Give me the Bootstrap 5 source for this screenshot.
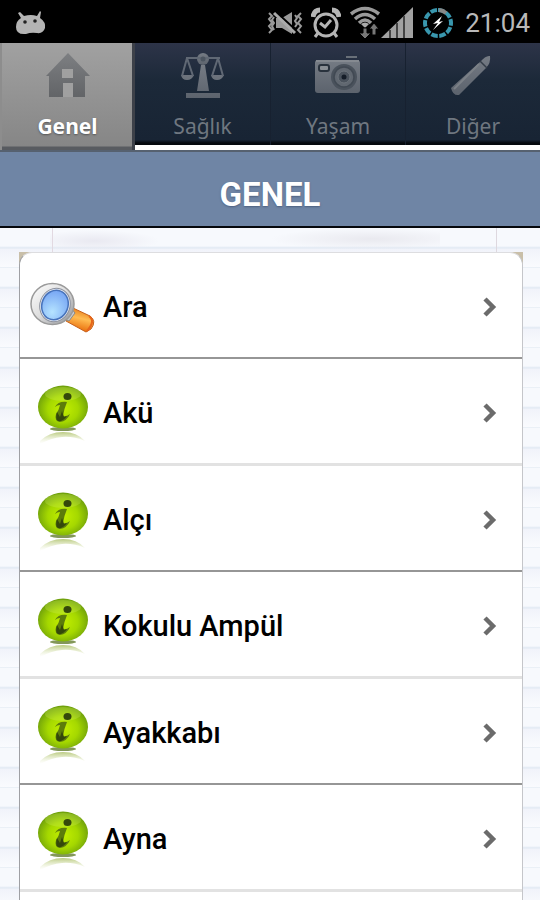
<!DOCTYPE html>
<html lang="tr">
<head>
<meta charset="utf-8">
<meta name="viewport" content="width=device-width, initial-scale=1">
<title>Genel</title>
<link href="https://cdn.jsdelivr.net/npm/bootstrap@5.3.0/dist/css/bootstrap.min.css" rel="stylesheet">
<style>
  body { font-family: Roboto, "Noto Sans", sans-serif; background: #fff; }
  .screen { height: 100vh; overflow: hidden; }
  .statusbar { background: #000; height: 43px; padding: 2px 10px 0 15px; }
  .clock { color: #b9b9b9; font-size: 26px; line-height: 40px; margin-left: 10px; }
  .tabs { height: 107px; padding-bottom: 5px; background: linear-gradient(#2d3448, #1c2939 35%, #182434 97px, #05090e 100px 102px, #fff 102px); }
  .tab-btn { border: 0; border-left: 1px solid #172130; padding: 9px 0 0; background: none;
    color: #6f7780; font: 21px/28px "Noto Sans", sans-serif; }
  .tab-btn:nth-child(2) { border-left: 0; }
  .tab-btn svg { margin-bottom: 12px; }
  .tab-btn.current { color: #fff; font-weight: 700; background: linear-gradient(90deg, #8d8d8d 2px, #0000 2px calc(100% - 3px), #3d4149 calc(100% - 3px)), linear-gradient(#a1a1a1, #868686 103px, #585b60 104px);
    border: 0; margin-bottom: -5px; text-shadow: 0 1px 2px #555; }
  .titlebar { background: #6f85a5; border-top: 2px solid #566170; border-bottom: 2px solid #05070c; padding: 23px 0 11px; }
  .titlebar h1 { font-size: 33px; line-height: 40px; font-weight: 700; color: #fff; text-shadow: 0 1px 2px #4d5f7e; }
  .paper { padding: 24px 17px 0 19px; background:
      linear-gradient(#e2d9e1, #e2d9e1) 52px 0 / 1px 24px no-repeat,
      linear-gradient(#ded8df, #ded8df) calc(100% - 43px) 0 / 1px 24px no-repeat,
      radial-gradient(ellipse at 40% 50%, #e9e9f1 0, #e9e9f100 70%) 50px 2px / 110px 22px no-repeat,
      radial-gradient(ellipse at 60% 50%, #e9e9ef 0, #e9e9ef00 70%) 270px 0 / 170px 22px no-repeat,
      repeating-linear-gradient(#f7f9fd 0 18px, #dfe8f2 20px, #f1f3fa 21px, #fafbfe 39px, #dbe5ef 40px); }
  .paper-corner { background: #c9bfa9; }
  .items { background: #fff; border: 1px solid #9fa0a4; border-top-color: #dddde0; border-bottom: 0; border-right-color: #c5c6ca; border-radius: 13px 13px 0 0; }
  .item { height: 106px; border-bottom: 2px solid #969696; color: #000; padding: 4px 24px 0 9px; font-size: 29px; line-height: 36px; font-weight: 500; }
  .item:nth-child(even) { height: 107px; border-bottom: 3px solid #e2e2e2; }
  .item-icon { width: 68px; margin-right: 6px; }
</style>
<script src="https://cdn.jsdelivr.net/npm/bootstrap@5.3.0/dist/js/bootstrap.bundle.min.js"></script>
</head>
<body>
<svg width="0" height="0" class="position-absolute" aria-hidden="true">
  <defs>
    <radialGradient id="green" cx=".5" cy=".55" r=".55"><stop offset="0" stop-color="#c4f000"/><stop offset=".55" stop-color="#a5d800"/><stop offset="1" stop-color="#6c9d0c"/></radialGradient>
    <linearGradient id="mirror" x2="0" y2="1"><stop offset="0" stop-color="#a8bd60" stop-opacity=".8"/><stop offset="1" stop-color="#e8efc8" stop-opacity="0"/></linearGradient>
    <linearGradient id="metal" x2="1" y2="1"><stop offset="0" stop-color="#fff"/><stop offset=".5" stop-color="#ddd"/><stop offset="1" stop-color="#8d8f94"/></linearGradient>
    <radialGradient id="lens" cx=".5" cy=".75" r=".75"><stop offset="0" stop-color="#b5e3ff"/><stop offset="1" stop-color="#76a5f4"/></radialGradient>
    <linearGradient id="handle" x1=".65" y1=".1" x2=".4" y2=".95"><stop offset="0" stop-color="#e98420"/><stop offset=".4" stop-color="#ffbc52"/><stop offset="1" stop-color="#e86a08"/></linearGradient>
    <linearGradient id="grey" x2="0" y2="1"><stop offset="0" stop-color="#757b84"/><stop offset="1" stop-color="#5c636d"/></linearGradient>
    <linearGradient id="house" x2="0" y2="1"><stop offset="0" stop-color="#7d7f82"/><stop offset="1" stop-color="#626467"/></linearGradient>
    <symbol id="info" viewBox="0 0 68 68">
      <path d="M11 62Q20 53 34 53T56 62Q44 57 33 58T11 65Z" fill="url(#mirror)"/>
      <ellipse cx="34" cy="50" rx="13" ry="2" fill="#4f6b12" opacity=".7"/>
      <ellipse cx="34" cy="28" rx="25" ry="21.5" fill="url(#green)"/>
      <ellipse cx="34" cy="15" rx="18" ry="7" fill="#d9f26a" opacity=".25"/>
      <ellipse cx="38.500" cy="17.500" rx="4" ry="3.500" fill="#34480b"/>
      <path d="M26 28Q29 22 38 23Q35 30 34 37Q37 38 41 35Q38 42 31 43Q25 42 27 35Q30 31 31 26Q28 26 26 28Z" fill="#5c7c0b"/>
      <path d="M28 33L31 38 33 32 35 38 38 37Q34 43 29 42Q26 40 28 33Z" fill="#34480b"/>
    </symbol>
    <symbol id="next" viewBox="0 0 16 22"><path d="M3 3L11 11 3 19" fill="none" stroke="#6b6b6b" stroke-width="4.5"/></symbol>
  </defs>
</svg>

<div class="screen d-flex flex-column">
  <div class="statusbar d-flex align-items-center flex-shrink-0">
    <svg width="32" height="26" viewBox="0 0 32 26" class="me-auto" aria-label="Android"><path d="M5 2L9 6Q16 4 22 6L25 1 26 2 25 8Q31 12 30 18Q28 24 22 23Q16 22 11 24Q1 25 1 17Q1 11 6 8L3 3Z" fill="#b4b4b4"/><circle cx="10" cy="12" r="1.8" fill="#222"/><circle cx="20" cy="11" r="1.8" fill="#222"/></svg>
    <svg width="36" height="28" viewBox="0 0 36 28" aria-label="Sessiz"><path d="M9 9H15L25 3V25L15 19H9Z" fill="#999"/><path d="M8 2L31 23" stroke="#000" stroke-width="2"/><path d="M7 4L28 24" stroke="#aaa" stroke-width="3"/><path d="M2 4l3 3-3 3 3 4-3 3 3 4-3 3M7 8l-2 3 2 3-2 3 2 4M34 4l-3 3 3 3-3 4 3 3-3 4 3 3M28 6l2 3-2 3 2 3-2 3" fill="none" stroke="#999" stroke-width="2"/></svg>
    <svg class="ms-2" width="30" height="32" viewBox="0 0 30 32" aria-label="Alarm"><circle cx="15" cy="18" r="11" fill="none" stroke="#b5b5b5" stroke-width="3"/><path d="M2 10Q3 3 9 3M21 3Q27 3 28 10" fill="none" stroke="#b5b5b5" stroke-width="5"/><path d="M9 16L14 20 20 13M7 26L4 30M23 26L26 30" fill="none" stroke="#b5b5b5" stroke-width="3"/></svg>
    <svg class="ms-2" width="32" height="34" viewBox="0 0 32 34" aria-label="Wi-Fi"><path d="M2 8Q16-3 30 8M6 13Q16 4 26 13M10 17Q16 11 22 17" fill="none" stroke="#999" stroke-width="3.5"/><path d="M12 18Q16 15 20 18L16 22Z" fill="#aaa"/><path d="M14 22h4v5h4l-6 6-6-6h4ZM23 29v-6h-3l5-6 5 6h-3v6Z" fill="#777" stroke="#000"/></svg>
    <svg width="32" height="34" viewBox="0 0 32 34" aria-label="Sinyal"><path d="M0 32L32 1V32Z" fill="#a2a2a2"/><path d="M9 24V32M16 17V32M23 10V32" stroke="#444" stroke-width="2"/></svg>
    <svg class="ms-2" width="34" height="34" viewBox="0 0 34 34" aria-label="Pil"><circle cx="17" cy="17" r="13" fill="none" stroke="#3997ae" stroke-width="4" stroke-dasharray="6.6 1.568" transform="rotate(-90 17 17)"/><path d="M18 4A13 13 0 0 1 25 7" fill="none" stroke="#888" stroke-width="4"/><path d="M21 10L12 18 17 17 12 24 22 15 18 16Z" fill="#fff"/></svg>
    <span class="clock">21:04</span>
  </div>

  <nav class="tabs d-flex flex-shrink-0" aria-label="Kategoriler">
    <button type="button" class="tab-btn current col-3 d-flex flex-column align-items-center" aria-current="page">
      <svg width="48" height="48" viewBox="0 0 48 48"><path d="M24 1L46 24H41V45H5V24H2Z" fill="url(#house)"/><path d="M18 17H29V26H18ZM19 31H29V45H19Z" fill="#a0a0a0"/></svg>
      <span>Genel</span>
    </button>
    <button type="button" class="tab-btn col-3 d-flex flex-column align-items-center">
      <svg width="48" height="48" viewBox="0 0 48 48"><g fill="url(#grey)"><circle cx="24" cy="7" r="6"/><path d="M22 13H26L30 39H18ZM7 41H41V46H7ZM2 23H15Q13 28 8 28T2 23ZM32 23H45Q43 28 38 28T32 23Z"/></g><path d="M7 6H41M8 6L3 24M8 6L14 24M39 6L33 24M39 6L44 24" fill="none" stroke="#606874" stroke-width="2"/><circle cx="24" cy="7" r="2.5" fill="#4c5560"/></svg>
      <span>Sağlık</span>
    </button>
    <button type="button" class="tab-btn col-3 d-flex flex-column align-items-center">
      <svg width="48" height="48" viewBox="0 0 48 48"><rect x="1" y="8" width="45" height="33" rx="3" fill="url(#grey)"/><path d="M32 5H43" stroke="#697079" stroke-width="2"/><path d="M2 9H45" stroke="#858a91" stroke-width="2"/><rect x="5" y="13" width="10" height="6" rx="2" fill="#8a8f95" stroke="#29323d" stroke-width="2"/><circle cx="30" cy="25" r="13" fill="#4a525c"/><circle cx="30" cy="25" r="10" fill="#606770" stroke="#414953" stroke-width="1.5"/><circle cx="30" cy="25" r="6" fill="#4a525c" stroke="#6d747c"/><circle cx="30" cy="25" r="2.5" fill="#151d28"/></svg>
      <span>Yaşam</span>
    </button>
    <button type="button" class="tab-btn col-3 d-flex flex-column align-items-center">
      <svg width="48" height="48" viewBox="0 0 48 48"><path d="M31 10Q37 3 41 4Q42 11 37 16L10 43Q4 44 2 36Z" fill="url(#grey)"/><path d="M31 9L38 16" stroke="#343d48" stroke-width="1.5"/><path d="M30 12L5 37" stroke="#7b8087" stroke-width="2"/></svg>
      <span>Diğer</span>
    </button>
  </nav>

  <header class="titlebar text-center flex-shrink-0"><h1 class="m-0">GENEL</h1></header>

  <main class="paper flex-grow-1 d-flex flex-column">
    <div class="paper-corner flex-grow-1 d-flex flex-column">
    <div class="items flex-grow-1">
      <a href="#ara" class="item d-flex align-items-center text-decoration-none">
        <svg class="item-icon" height="68" viewBox="0 0 68 68"><path d="M44 35L61 43Q68 48 62 56L57 59 37 48Z" fill="url(#handle)" stroke="#c5601b"/><path d="M60 43Q67 48 58 58" fill="none" stroke="#e6651c" stroke-width="2"/><path d="M34 45L42 35 46 40 40 48Z" fill="#c7cacd" stroke="#888"/><ellipse cx="23.500" cy="31" rx="21.500" ry="20.500" fill="url(#metal)" stroke="#9a9a9a" stroke-width="1.5"/><ellipse cx="26" cy="32" rx="15" ry="17" transform="rotate(22 26 32)" fill="#e9edf5" stroke="#8c919d"/><ellipse cx="26" cy="32" rx="13" ry="15" transform="rotate(22 26 32)" fill="url(#lens)" stroke="#4773bb" stroke-width="1.5"/></svg>
        <span class="flex-grow-1">Ara</span><svg width="16" height="22"><use href="#next"/></svg>
      </a>
      <a href="#aku" class="item d-flex align-items-center text-decoration-none"><svg class="item-icon" height="68"><use href="#info"/></svg><span class="flex-grow-1">Akü</span><svg width="16" height="22"><use href="#next"/></svg></a>
      <a href="#alci" class="item d-flex align-items-center text-decoration-none"><svg class="item-icon" height="68"><use href="#info"/></svg><span class="flex-grow-1">Alçı</span><svg width="16" height="22"><use href="#next"/></svg></a>
      <a href="#ampul" class="item d-flex align-items-center text-decoration-none"><svg class="item-icon" height="68"><use href="#info"/></svg><span class="flex-grow-1">Kokulu Ampül</span><svg width="16" height="22"><use href="#next"/></svg></a>
      <a href="#ayakkabi" class="item d-flex align-items-center text-decoration-none"><svg class="item-icon" height="68"><use href="#info"/></svg><span class="flex-grow-1">Ayakkabı</span><svg width="16" height="22"><use href="#next"/></svg></a>
      <a href="#ayna" class="item d-flex align-items-center text-decoration-none"><svg class="item-icon" height="68"><use href="#info"/></svg><span class="flex-grow-1">Ayna</span><svg width="16" height="22"><use href="#next"/></svg></a>
    </div>
    </div>
  </main>
</div>
</body>
</html>
